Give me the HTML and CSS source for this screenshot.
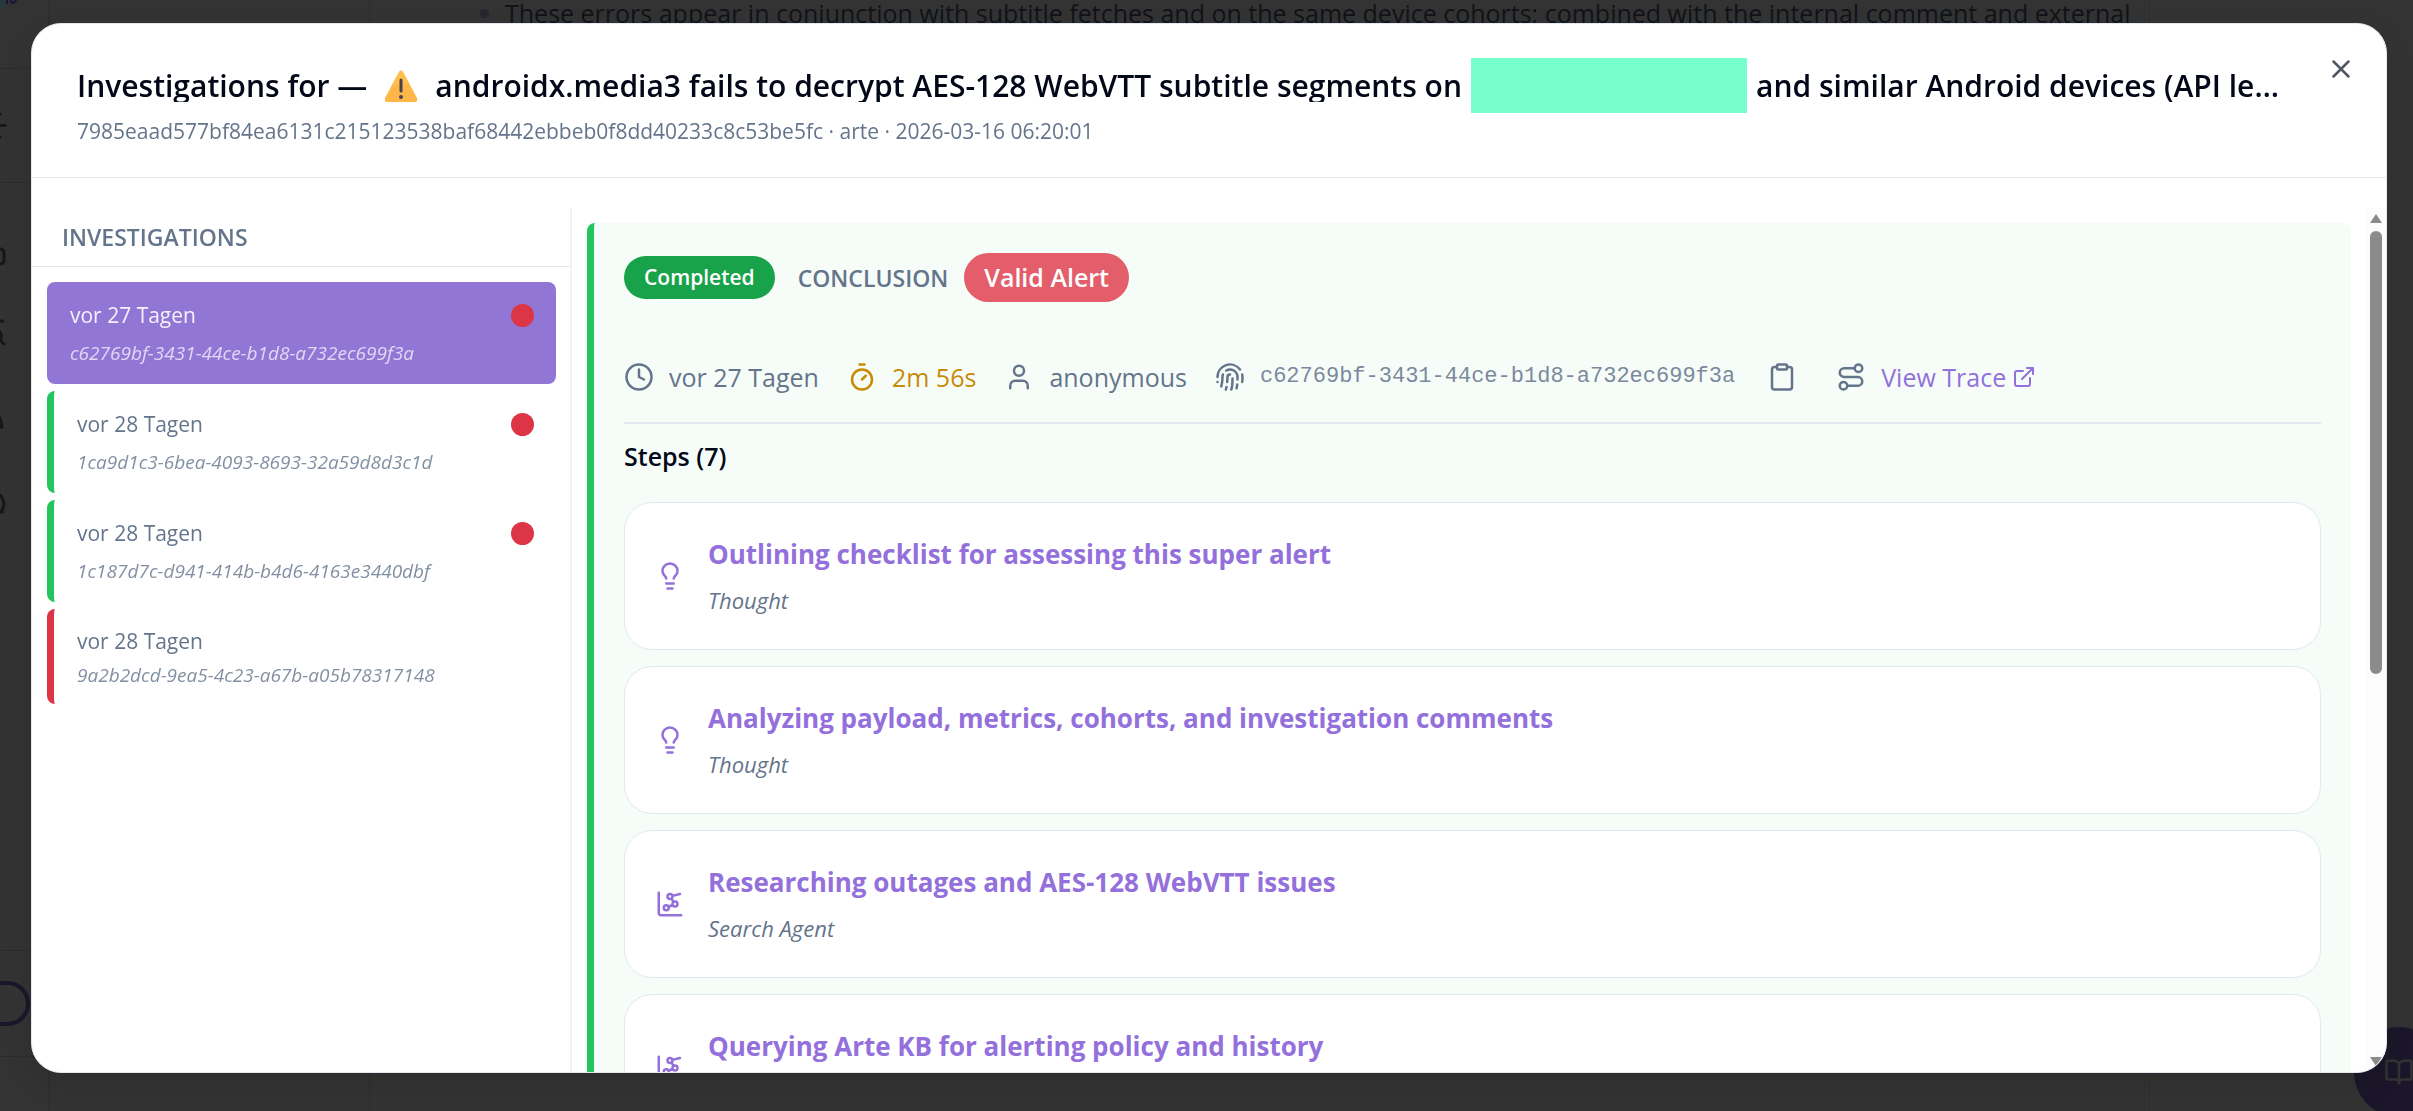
FILE: index.html
```html
<!DOCTYPE html>
<html lang="de">
<head>
<meta charset="utf-8">
<title>Investigations</title>
<link rel="stylesheet" href="styles.css">
</head>
<body>

<!-- icons -->
<svg class="sprite" aria-hidden="true">
    <symbol id="i-clock" viewBox="0 0 24 24"><circle cx="12" cy="12" r="10"/><path d="M12 6v6l4 2"/></symbol>
    <symbol id="i-timer" viewBox="0 0 24 24"><path d="M10 2h4M12 14l3-3"/><circle cx="12" cy="14" r="8"/></symbol>
    <symbol id="i-user" viewBox="0 0 24 24"><path d="M19 21v-2a4 4 0 0 0-4-4H9a4 4 0 0 0-4 4v2"/><circle cx="12" cy="7" r="4"/></symbol>
    <symbol id="i-finger" viewBox="0 0 24 24"><path d="M12 10a2 2 0 0 0-2 2c0 1.02-.1 2.51-.26 4"/><path d="M14 13.12c0 2.38 0 6.38-1 8.88"/><path d="M17.29 21.02c.12-.6.43-2.3.5-3.02"/><path d="M2 12a10 10 0 0 1 18-6"/><path d="M2 16h.01"/><path d="M21.8 16c.2-2 .131-5.354 0-6"/><path d="M5 19.5C5.5 18 6 15 6 12a6 6 0 0 1 .34-2"/><path d="M8.65 22c.21-.66.45-1.32.57-2"/><path d="M9 6.8a6 6 0 0 1 9 5.2v2"/></symbol>
    <symbol id="i-clipboard" viewBox="0 0 24 24"><rect x="8" y="2" width="8" height="4" rx="1"/><path d="M16 4h2a2 2 0 0 1 2 2v14a2 2 0 0 1-2 2H6a2 2 0 0 1-2-2V6a2 2 0 0 1 2-2h2"/></symbol>
    <symbol id="i-route" viewBox="0 0 24 24"><circle cx="6" cy="19" r="3"/><path d="M9 19h8.5a3.5 3.5 0 0 0 0-7h-11a3.5 3.5 0 0 1 0-7H15"/><circle cx="18" cy="5" r="3"/></symbol>
    <symbol id="i-external" viewBox="0 0 24 24"><path d="M15 3h6v6M10 14 21 3"/><path d="M18 13v6a2 2 0 0 1-2 2H5a2 2 0 0 1-2-2V8a2 2 0 0 1 2-2h6"/></symbol>
    <symbol id="i-bulb" viewBox="0 0 24 24"><path d="M15 14c.2-1 .7-1.7 1.5-2.5 1-.9 1.5-2.2 1.5-3.5A6 6 0 0 0 6 8c0 1 .2 2.2 1.5 3.5.7.7 1.3 1.5 1.5 2.5"/><path d="M9 18h6M10 22h4"/></symbol>
    <symbol id="i-network" viewBox="0 0 24 24"><path d="m13.11 7.664 1.78 2.672M14.162 12.788l-3.324 1.424M20 4l-6.06 1.515"/><path d="M3 3v16a2 2 0 0 0 2 2h16"/><circle cx="12" cy="6" r="2"/><circle cx="16" cy="12" r="2"/><circle cx="9" cy="15" r="2"/></symbol>
    <symbol id="i-book" viewBox="0 0 24 24"><path d="M12 7v14"/><path d="M3 18a1 1 0 0 1-1-1V4a1 1 0 0 1 1-1h5a4 4 0 0 1 4 4 4 4 0 0 1 4-4h5a1 1 0 0 1 1 1v13a1 1 0 0 1-1 1h-6a3 3 0 0 0-3 3 3 3 0 0 0-3-3z"/></symbol>
    <symbol id="i-x" viewBox="0 0 24 24"><path d="M18 6 6 18M6 6l12 12"/></symbol>
</svg>

<!-- page behind the dialog -->
<div class="page">
    <div class="rail">
        <svg class="rail-icons" width="50" height="1111" fill="none" stroke-linecap="round">
            <path d="M0 68.500h50M0 182.500h50M0 950.500h50M0 1056.500h50" stroke="#2b2c2e"/>
            <path d="M0 7 3 2" stroke="#1c3c46" stroke-width="3"/>
            <path d="M7 0v3M11 0q0 3 2 3t3-3" stroke="#15153a" stroke-width="2"/>
            <path d="M0 114h.1M0 125.500h5M0 137h.1M0 249q4 0 4 4v7q0 4-4 4M-3 321h6M0 332q3 4 0 8l4 4M0 418l2 9H-3M0 495q4 4 4 9t-4 8h3" stroke="#15171a" stroke-width="3"/>
        </svg>
    </div>
    <div class="list"></div>
    <div class="article">
        <ul>
            <li>These errors appear in conjunction with subtitle fetches and on the same device cohorts; combined with the internal comment and external</li>
        </ul>
    </div>
    <span class="ring"></span>
    <button class="fab" aria-label="Docs"><svg class="icon"><use href="#i-book"/></svg></button>
</div>

<div class="dialog" role="dialog">
    <header class="head">
        <h1 class="title">
            <span>Investigations for —</span>
            <svg class="warn" viewBox="0 0 34 32"><path d="M15 2Q17 -1 19 2L33 28Q34 32 31 32H3Q0 32 1 28Z" fill="#ffb648"/><path d="M15 2Q17 -1 19 2L26 15H8Z" fill="#ffc04c"/><path d="M17 10v11" stroke="#45424f" stroke-width="3" stroke-linecap="round"/><circle cx="17" cy="27" r="2" fill="#45424f"/></svg>
            <span>androidx.media3 fails to decrypt AES-128 WebVTT subtitle segments on</span>
            <span class="redacted"></span>
            <span class="rest">and similar Android devices (API level 30)</span>
        </h1>
        <p class="sub">7985eaad577bf84ea6131c215123538baf68442ebbeb0f8dd40233c8c53be5fc · arte · 2026-03-16 06:20:01</p>
        <button class="close" aria-label="Close"><svg class="icon"><use href="#i-x"/></svg></button>
    </header>

    <div class="body">
        <nav class="side">
            <h2 class="side-title">INVESTIGATIONS</h2>
            <div class="runs">
                <button class="run active"><span class="when">vor 27 Tagen<i class="dot"></i></span><em>c62769bf-3431-44ce-b1d8-a732ec699f3a</em></button>
                <button class="run"><span class="when">vor 28 Tagen<i class="dot"></i></span><em>1ca9d1c3-6bea-4093-8693-32a59d8d3c1d</em></button>
                <button class="run"><span class="when">vor 28 Tagen<i class="dot"></i></span><em>1c187d7c-d941-414b-b4d6-4163e3440dbf</em></button>
                <button class="run failed"><span class="when">vor 28 Tagen</span><em>9a2b2dcd-9ea5-4c23-a67b-a05b78317148</em></button>
            </div>
        </nav>

        <main class="main">
            <section class="detail">
                <div class="status">
                    <span class="pill done">Completed</span>
                    <span class="label">CONCLUSION</span>
                    <span class="pill alert">Valid Alert</span>
                </div>
                <div class="meta">
                    <span class="item"><svg class="icon"><use href="#i-clock"/></svg>vor 27 Tagen</span>
                    <span class="item time"><svg class="icon"><use href="#i-timer"/></svg>2m 56s</span>
                    <span class="item"><svg class="icon"><use href="#i-user"/></svg>anonymous</span>
                    <span class="item"><svg class="icon"><use href="#i-finger"/></svg><code>c62769bf-3431-44ce-b1d8-a732ec699f3a</code><button class="copy" aria-label="Copy"><svg class="icon"><use href="#i-clipboard"/></svg></button></span>
                    <span class="item trace"><svg class="icon"><use href="#i-route"/></svg><a href="#">View Trace <svg class="icon small"><use href="#i-external"/></svg></a></span>
                </div>
                <h2 class="steps-title">Steps (7)</h2>
                <div class="steps">
                    <div class="step"><svg class="icon"><use href="#i-bulb"/></svg><div><h3>Outlining checklist for assessing this super alert</h3><p>Thought</p></div></div>
                    <div class="step"><svg class="icon"><use href="#i-bulb"/></svg><div><h3>Analyzing payload, metrics, cohorts, and investigation comments</h3><p>Thought</p></div></div>
                    <div class="step"><svg class="icon"><use href="#i-network"/></svg><div><h3>Researching outages and AES-128 WebVTT issues</h3><p>Search Agent</p></div></div>
                    <div class="step"><svg class="icon"><use href="#i-network"/></svg><div><h3>Querying Arte KB for alerting policy and history</h3><p>Search Agent</p></div></div>
                </div>
            </section>
        </main>
        <div class="scroll"><i class="up"></i><i class="thumb"></i><i class="down"></i></div>
    </div>
</div>

</body>
</html>
```
FILE: styles.css
```css
*{
    box-sizing: border-box;
}
body{
    margin: 0;
    background: #333;
    font-family: "Open Sans", "Noto Sans", sans-serif;
    font-size: 21px;
    color: #020817;
}
h1, h2, h3, p, ul{
    margin: 0;
    padding: 0;
}
button{
    font-family: inherit;
    border: 0;
    padding: 0;
    background: none;
    cursor: pointer;
}
.sprite{
    position: absolute;
    width: 0;
    height: 0;
}
.icon{
    width: 30px;
    height: 30px;
    flex: none;
    display: block;
    fill: none;
    stroke: currentColor;
    stroke-width: 2;
    stroke-linecap: round;
    stroke-linejoin: round;
}

/* page behind */
.page{
    display: flex;
    height: 100vh;
    overflow: hidden;
    color: #111318;
}
.rail{
    width: 50px;
    flex: none;
    border-right: 2px solid #2d2e31;
}
.rail-icons{
    display: block;
}
.list{
    width: 320px;
    flex: none;
    border-right: 1px solid #2d2e31;
}
.article{
    width: 1780px;
    padding-left: 135px;
    border-right: 1px solid #2d2e31;
    white-space: nowrap;
    font-size: 25px;
    line-height: 26px;
}
.article li::marker{
    color: #26282d;
}
.ring{
    position: absolute;
    left: -28px;
    top: 981px;
    width: 58px;
    height: 45px;
    border: 4px solid #1b1629;
    border-radius: 23px;
}
.fab{
    position: absolute;
    right: -31px;
    bottom: -6px;
    width: 90px;
    height: 90px;
    border-radius: 50%;
    background: #1b1629;
    color: #333;
    padding-left: 30px;
}

/* dialog */
.dialog{
    position: fixed;
    top: 23px;
    right: 26px;
    bottom: 38px;
    left: 31px;
    display: flex;
    flex-direction: column;
    overflow: hidden;
    background: #fff;
    border: 1px solid #e2e8f0;
    border-radius: 30px;
    box-shadow: 0 12px 30px rgba(0, 0, 0, 0.1);
}
.head{
    position: relative;
    height: 154px;
    padding: 34px 94px 0 45px;
    border-bottom: 1px solid #e5e7eb;
}
.title{
    display: flex;
    align-items: center;
    gap: 9px;
    height: 55px;
    font-size: 30px;
    font-weight: 600;
    line-height: 32px;
    white-space: nowrap;
}
.title span{
    overflow: hidden;
    flex: none;
}
.warn{
    width: 34px;
    height: 32px;
    margin: 0 8px;
    flex: none;
}
.title .redacted{
    width: 276px;
    height: 55px;
    background: #76ffcc;
}
.title .rest{
    flex: 1;
    text-overflow: ellipsis;
}
.sub{
    margin-top: 3px;
    line-height: 30px;
    color: #64748b;
}
.close{
    position: absolute;
    top: 30px;
    right: 30px;
    color: #4f5563;
}

.body{
    flex: 1;
    display: flex;
    min-height: 0;
    padding-top: 30px;
}
.side{
    width: 540px;
    flex: none;
    border-right: 2px solid #f1f2f4;
}
.side-title{
    height: 59px;
    padding: 0 30px;
    border-bottom: 1px solid #e5e7eb;
    font-size: 23px;
    font-weight: 600;
    line-height: 58px;
    color: #64748b;
}
.runs{
    display: flex;
    flex-direction: column;
    gap: 7px;
    padding: 15px 14px 15px 15px;
}
.run{
    display: flex;
    flex-direction: column;
    justify-content: center;
    gap: 12px;
    height: 102px;
    padding: 0 22px 0 23px;
    border-left: 7px solid #22c55e;
    border-radius: 8px;
    font-size: 21px;
    text-align: left;
    color: #64748b;
}
.run.active{
    border: 0;
    background: #9176d5;
    color: #f4f1fb;
}
.run.failed{
    gap: 8px;
    height: 95px;
    border-color: #dc3545;
}
.when{
    display: flex;
    justify-content: space-between;
    align-items: center;
    width: 100%;
    line-height: 28px;
}
.dot{
    width: 23px;
    height: 23px;
    border-radius: 50%;
    background: #dc3545;
}
.run em{
    font-size: 19px;
    line-height: 24px;
    opacity: 0.8;
}

.main{
    flex: 1;
    min-width: 0;
    overflow: hidden;
    padding: 15px 15px 0;
}
.detail{
    padding: 30px;
    border-left: 7px solid #22c55e;
    border-radius: 8px;
    background: #f6fdf9;
}
.status{
    display: flex;
    align-items: center;
    height: 49px;
}
.pill{
    border-radius: 25px;
    padding: 0 20px;
    font-weight: 600;
    color: #fff;
}
.done{
    background: #18a34a;
    font-size: 21px;
    line-height: 43px;
}
.label{
    margin: 0 16px 0 23px;
    font-size: 23px;
    font-weight: 600;
    color: #64748b;
}
.alert{
    background: #e35d6a;
    font-size: 25px;
    line-height: 49px;
}
.meta{
    display: flex;
    align-items: center;
    gap: 28px;
    height: 122px;
    padding-top: 29px;
    border-bottom: 2px solid #e2e8f0;
    font-size: 25px;
    white-space: nowrap;
    color: #64748b;
}
.item{
    display: flex;
    align-items: center;
    gap: 15px;
}
.time{
    color: #ca8a04;
}
.meta code{
    font-family: "Liberation Mono", monospace;
    font-size: 22px;
    color: #7c899c;
}
.copy{
    margin: 0 11px 0 17px;
    color: inherit;
}
.meta a{
    display: flex;
    align-items: center;
    gap: 6px;
    color: #9370db;
    text-decoration: none;
}
.icon.small{
    width: 24px;
    height: 24px;
}
.steps-title{
    font-size: 25px;
    font-weight: 600;
    line-height: 64px;
}
.steps{
    display: flex;
    flex-direction: column;
    gap: 16px;
    padding-top: 14px;
}
.step{
    display: flex;
    align-items: center;
    gap: 23px;
    height: 148px;
    padding: 0 30px;
    background: #fff;
    border: 1px solid #e2e8f0;
    border-radius: 28px;
    color: #9370db;
}
.step h3{
    font-size: 26px;
    font-weight: 700;
    line-height: 34px;
}
.step p{
    margin-top: 14px;
    font-size: 22px;
    font-style: italic;
    line-height: 30px;
    color: #64748b;
}

.scroll{
    display: flex;
    flex-direction: column;
    align-items: center;
    width: 20px;
    padding: 6px 0;
    background: #fcfcfc;
}
.up, .down{
    border: 6px solid transparent;
    border-top-width: 0;
    border-bottom: 9px solid #8b8b8b;
}
.down{
    margin-top: auto;
    border-top: 9px solid #8b8b8b;
    border-bottom-width: 0;
}
.thumb{
    width: 12px;
    height: 52%;
    margin-top: 8px;
    border-radius: 6px;
    background: #8b8b8b;
}
```
